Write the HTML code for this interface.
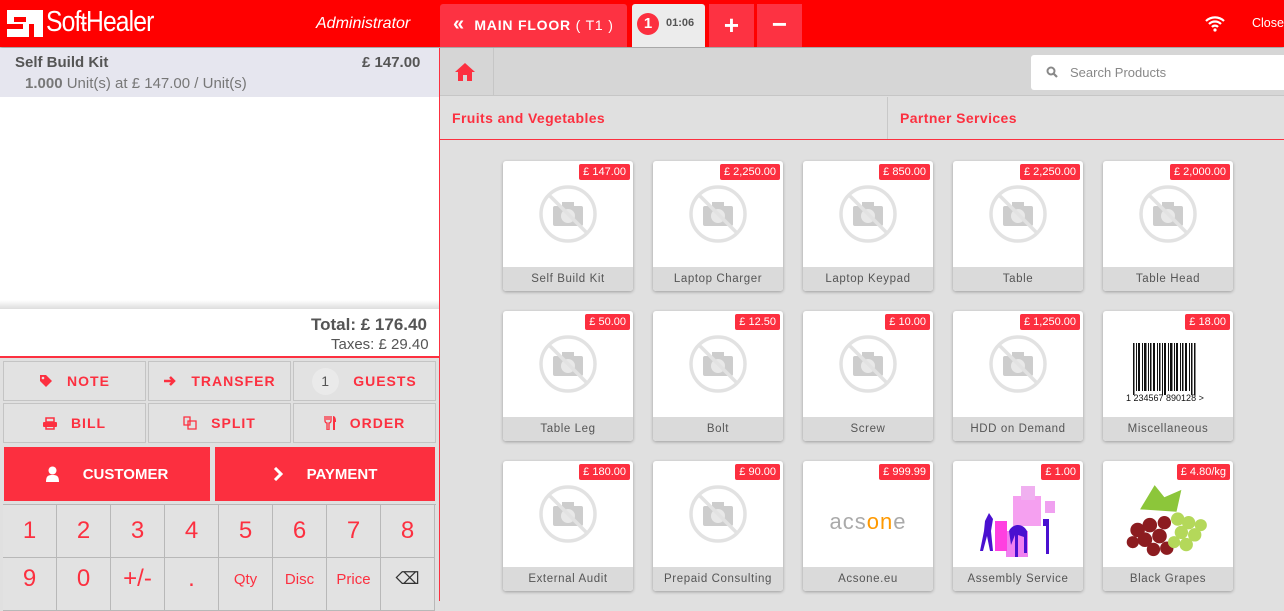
<!DOCTYPE html>
<html><head><meta charset="utf-8"><style>
*{box-sizing:border-box;margin:0;padding:0}
body{width:1284px;height:601px;overflow:hidden;font-family:"Liberation Sans",sans-serif;background:#e0e0e0;position:relative}
.a{position:absolute}
.hdr{left:0;top:0;width:1284px;height:47px;background:#ff0000;box-shadow:0 1px 3px rgba(0,0,0,.4)}
.red{color:#fc3040}
.btn{position:absolute;background:#e2e2e2;border:1px solid #c4c4c4;color:#fc3040;font-size:14px;font-weight:bold;letter-spacing:1px;display:flex;align-items:center;justify-content:center;gap:14px}
.big{position:absolute;background:#fc2f3f;color:#fff;font-size:15px;font-weight:bold;display:flex;align-items:center;justify-content:center;gap:24px}
.np{position:absolute;border-right:1px solid #b8b8b8;border-bottom:1px solid #b8b8b8;color:#fc3040;font-size:24px;display:flex;align-items:center;justify-content:center;background:#e2e2e2}
.card{position:absolute;width:130px;height:130px;background:#fff;border-radius:3px;box-shadow:0 1px 3px rgba(0,0,0,.3);overflow:hidden}
.card .nm{position:absolute;left:0;bottom:0;width:130px;height:24px;background:#dadada;color:#555;font-size:11.5px;letter-spacing:.6px;text-align:center;line-height:24px}
.card .pr{position:absolute;right:3px;top:3px;background:#fc2f3f;color:#fff;font-size:11px;padding:2px 4px;border-radius:2px}
.card .im{position:absolute;left:0;top:0;width:130px;height:106px;display:flex;align-items:center;justify-content:center}
</style></head><body>
<div class="a hdr"></div>
<div class="a" style="left:7px;top:10px;width:36px;height:27px;background:#fff"></div>
<div class="a" style="left:14px;top:17px;width:12px;height:5px;background:#ff0000"></div>
<div class="a" style="left:7px;top:24px;width:16px;height:5px;background:#ff0000"></div>
<div class="a" style="left:29px;top:24px;width:5px;height:13px;background:#ff0000"></div>
<div class="a" style="left:46px;top:6px;color:#fff;font-size:29px;letter-spacing:-1px;transform:scaleX(.85);transform-origin:left">Sof<span style="font-size:27px">ŧ</span>Healer</div>
<div class="a" style="left:316px;top:15px;color:#fff;font-size:16px;font-style:italic">Administrator</div>
<div class="a" style="left:440px;top:4px;width:187px;height:43px;background:#fd3242;border-radius:3px 3px 0 0;color:#fff;font-size:14px;font-weight:bold;letter-spacing:.8px;line-height:40px;padding-left:13px"><span style="font-size:20px">«</span>&nbsp; MAIN FLOOR <span style="font-weight:normal">( T1 )</span></div>
<div class="a" style="left:632px;top:4px;width:73px;height:43px;background:#ececec;border-radius:3px 3px 0 0"></div>
<div class="a" style="left:637px;top:13px;width:22px;height:22px;border-radius:50%;background:#fc2f3f;color:#fff;font-weight:bold;font-size:15px;text-align:center;line-height:22px">1</div>
<div class="a" style="left:666px;top:17px;font-size:11px;font-weight:bold;color:#555">01:06</div>
<div class="a" style="left:709px;top:4px;width:45px;height:43px;background:#fd3242;color:#fff;font-size:26px;font-weight:bold;text-align:center;line-height:42px">+</div>
<div class="a" style="left:757px;top:4px;width:45px;height:43px;background:#fd3242;color:#fff;font-size:26px;font-weight:bold;text-align:center;line-height:40px">−</div>
<svg class="a" style="left:1204px;top:14px" width="22" height="18" viewBox="0 0 22 18"><path d="M2 7a13 13 0 0 1 18 0M5 10a8.5 8.5 0 0 1 12 0M8 13a4 4 0 0 1 6 0" stroke="#fff" stroke-width="2.2" fill="none"/><circle cx="11" cy="16" r="1.6" fill="#fff"/></svg>
<div class="a" style="left:1252px;top:16px;color:#fff;font-size:12.5px">Close</div>

<div class="a" style="left:0;top:48px;width:439px;height:260px;background:#fff"></div>
<div class="a" style="left:0;top:48px;width:439px;height:49px;background:#e6e6ef"></div>
<div class="a" style="left:15px;top:54px;font-size:15px;font-weight:bold;color:#555">Self Build Kit</div>
<div class="a" style="left:362px;top:54px;font-size:15px;font-weight:bold;color:#555">£ 147.00</div>
<div class="a" style="left:25px;top:75px;font-size:15px;color:#777"><b style="color:#777">1.000</b> Unit(s) at £ 147.00 / Unit(s)</div>
<div class="a" style="left:0;top:300px;width:439px;height:9px;background:linear-gradient(#fff,#ddd)"></div>
<div class="a" style="left:0;top:309px;width:439px;height:49px;background:#fff;border-bottom:2px solid #fc3040"></div>
<div class="a" style="left:311px;top:315px;font-size:17px;font-weight:bold;color:#555">Total: £ 176.40</div>
<div class="a" style="left:331px;top:336px;font-size:15px;color:#555">Taxes: £ 29.40</div>
<div class="a" style="left:0;top:360px;width:439px;height:241px;background:#e0e0e0"></div>
<div class="a" style="left:439px;top:48px;width:1px;height:553px;background:#fc3040"></div>

<div class="btn" style="left:3px;top:361px;width:143px;height:40px"><svg width="14" height="14" viewBox="0 0 14 14"><path d="M1 1h6l6 6-6 6-6-6z" fill="#fc3040"/><circle cx="4" cy="4" r="1.3" fill="#e2e2e2"/></svg><span>NOTE</span></div>
<div class="btn" style="left:148px;top:361px;width:143px;height:40px"><svg width="14" height="12" viewBox="0 0 14 12"><path d="M1 6h10M7 2l4 4-4 4" stroke="#fc3040" stroke-width="2.5" fill="none"/></svg><span>TRANSFER</span></div>
<div class="btn" style="left:293px;top:361px;width:143px;height:40px"><span style="background:#eaeaea;border-radius:50%;width:27px;height:27px;display:inline-flex;align-items:center;justify-content:center;color:#555;font-weight:normal">1</span><span>GUESTS</span></div>
<div class="btn" style="left:3px;top:403px;width:143px;height:40px"><svg width="14" height="13" viewBox="0 0 14 13"><rect x="3" y="1" width="8" height="4" fill="none" stroke="#fc3040" stroke-width="1.5"/><rect x="0" y="5" width="14" height="5" rx="1" fill="#fc3040"/><rect x="3" y="9" width="8" height="3" fill="none" stroke="#fc3040" stroke-width="1.5"/></svg><span>BILL</span></div>
<div class="btn" style="left:148px;top:403px;width:143px;height:40px"><svg width="14" height="14" viewBox="0 0 14 14"><path d="M1 1h6v8H1zM5 5h8v8H5z" fill="none" stroke="#fc3040" stroke-width="1.3"/></svg><span>SPLIT</span></div>
<div class="btn" style="left:293px;top:403px;width:143px;height:40px"><svg width="12" height="14" viewBox="0 0 12 14"><path d="M1 0v5c0 1 1 2 2 2v7h2V7c1 0 2-1 2-2V0M3 0v4M5 0v4" stroke="#fc3040" stroke-width="1.3" fill="none"/><path d="M9 0c2 0 3 2 3 6h-1v8H9z" fill="#fc3040"/></svg><span>ORDER</span></div>
<div class="big" style="left:4px;top:447px;width:206px;height:54px"><svg width="13" height="16" viewBox="0 0 13 16"><circle cx="6.5" cy="4.5" r="4" fill="#fff"/><path d="M0 16c0-6 2-7 6.5-7S13 10 13 16z" fill="#fff"/></svg><span>CUSTOMER</span></div>
<div class="big" style="left:215px;top:447px;width:220px;height:54px"><svg width="10" height="14" viewBox="0 0 10 14"><path d="M2 1l6 6-6 6" stroke="#fff" stroke-width="3" fill="none"/></svg><span>PAYMENT</span></div>
<div class="a" style="left:3px;top:504px;width:433px;height:97px;border-top:1px solid #b8b8b8;border-left:1px solid #b8b8b8"></div>
<div class="np" style="left:3px;top:505px;width:54px;height:53px">1</div>
<div class="np" style="left:57px;top:505px;width:54px;height:53px">2</div>
<div class="np" style="left:111px;top:505px;width:54px;height:53px">3</div>
<div class="np" style="left:165px;top:505px;width:54px;height:53px">4</div>
<div class="np" style="left:219px;top:505px;width:54px;height:53px">5</div>
<div class="np" style="left:273px;top:505px;width:54px;height:53px">6</div>
<div class="np" style="left:327px;top:505px;width:54px;height:53px">7</div>
<div class="np" style="left:381px;top:505px;width:54px;height:53px">8</div>
<div class="np" style="left:3px;top:558px;width:54px;height:53px;padding-bottom:10px">9</div>
<div class="np" style="left:57px;top:558px;width:54px;height:53px;padding-bottom:10px">0</div>
<div class="np" style="left:111px;top:558px;width:54px;height:53px;padding-bottom:10px">+/-</div>
<div class="np" style="left:165px;top:558px;width:54px;height:53px;padding-bottom:10px">.</div>
<div class="np" style="left:219px;top:558px;width:54px;height:53px;font-size:15px;padding-bottom:10px">Qty</div>
<div class="np" style="left:273px;top:558px;width:54px;height:53px;font-size:15px;padding-bottom:10px">Disc</div>
<div class="np" style="left:327px;top:558px;width:54px;height:53px;font-size:15px;padding-bottom:10px">Price</div>
<div class="np" style="left:381px;top:558px;width:54px;height:53px;color:#333;font-size:17px;padding-bottom:10px">⌫</div>

<div class="a" style="left:440px;top:48px;width:844px;height:48px;background:#d6d6d6;border-bottom:1px solid #c6c6c6"></div>
<div class="a" style="left:493px;top:48px;width:1px;height:48px;background:#c6c6c6"></div>
<svg class="a" style="left:454px;top:62px" width="22" height="20" viewBox="0 0 22 20"><path d="M11 1L1 10h3v9h5v-6h4v6h5v-9h3z" fill="#fc3040"/></svg>
<div class="a" style="left:1031px;top:55px;width:260px;height:35px;background:#fff;border-radius:3px"></div>
<svg class="a" style="left:1046px;top:66px" width="12" height="12" viewBox="0 0 12 12"><circle cx="5" cy="5" r="3.5" stroke="#888" stroke-width="2" fill="none"/><path d="M7.5 7.5l3.5 3.5" stroke="#888" stroke-width="2.2"/></svg>
<div class="a" style="left:1070px;top:65px;font-size:13px;color:#888">Search Products</div>
<div class="a" style="left:440px;top:97px;width:844px;height:43px;background:#e0e0e0;border-bottom:1px solid #fc3040"></div>
<div class="a" style="left:887px;top:97px;width:1px;height:42px;background:#c8c8c8"></div>
<div class="a red" style="left:452px;top:110px;font-size:14px;font-weight:bold;letter-spacing:.4px">Fruits and Vegetables</div>
<div class="a red" style="left:900px;top:110px;font-size:14px;font-weight:bold;letter-spacing:.4px">Partner Services</div>

<svg width="0" height="0" style="position:absolute"><defs><symbol id="ph" viewBox="0 0 60 60"><circle cx="30" cy="30" r="27" stroke="#e2e2e2" stroke-width="3.5" fill="none"/><rect x="15" y="22" width="30" height="20" rx="2" fill="#cdcdcd"/><rect x="24" y="18" width="12" height="6" fill="#cdcdcd"/><circle cx="30" cy="32" r="7" fill="#e8e8e8"/><path d="M11 11L49 49" stroke="#e2e2e2" stroke-width="3.5"/></symbol></defs></svg>

<div class="card" style="left:503px;top:161px"><div class="im"><svg width="60" height="60"><use href="#ph"/></svg></div><div class="pr">£ 147.00</div><div class="nm">Self Build Kit</div></div>
<div class="card" style="left:653px;top:161px"><div class="im"><svg width="60" height="60"><use href="#ph"/></svg></div><div class="pr">£ 2,250.00</div><div class="nm">Laptop Charger</div></div>
<div class="card" style="left:803px;top:161px"><div class="im"><svg width="60" height="60"><use href="#ph"/></svg></div><div class="pr">£ 850.00</div><div class="nm">Laptop Keypad</div></div>
<div class="card" style="left:953px;top:161px"><div class="im"><svg width="60" height="60"><use href="#ph"/></svg></div><div class="pr">£ 2,250.00</div><div class="nm">Table</div></div>
<div class="card" style="left:1103px;top:161px"><div class="im"><svg width="60" height="60"><use href="#ph"/></svg></div><div class="pr">£ 2,000.00</div><div class="nm">Table Head</div></div>

<div class="card" style="left:503px;top:311px"><div class="im"><svg width="60" height="60"><use href="#ph"/></svg></div><div class="pr">£ 50.00</div><div class="nm">Table Leg</div></div>
<div class="card" style="left:653px;top:311px"><div class="im"><svg width="60" height="60"><use href="#ph"/></svg></div><div class="pr">£ 12.50</div><div class="nm">Bolt</div></div>
<div class="card" style="left:803px;top:311px"><div class="im"><svg width="60" height="60"><use href="#ph"/></svg></div><div class="pr">£ 10.00</div><div class="nm">Screw</div></div>
<div class="card" style="left:953px;top:311px"><div class="im"><svg width="60" height="60"><use href="#ph"/></svg></div><div class="pr">£ 1,250.00</div><div class="nm">HDD on Demand</div></div>
<div class="card" style="left:1103px;top:311px"><div class="im"><svg class="a" style="left:22px;top:30px" width="85" height="62" viewBox="0 0 85 62"><g fill="#111"><rect x="8" y="2" width="1.5" height="52"/><rect x="11" y="2" width="1" height="48"/><rect x="13" y="2" width="2" height="48"/><rect x="17" y="2" width="1" height="48"/><rect x="19" y="2" width="2.5" height="48"/><rect x="23" y="2" width="1" height="48"/><rect x="25" y="2" width="1.5" height="48"/><rect x="28" y="2" width="2" height="48"/><rect x="32" y="2" width="1" height="48"/><rect x="34" y="2" width="1.5" height="48"/><rect x="37" y="2" width="1" height="52"/><rect x="39" y="2" width="2" height="52"/><rect x="43" y="2" width="1" height="48"/><rect x="45" y="2" width="2.5" height="48"/><rect x="49" y="2" width="1" height="48"/><rect x="51" y="2" width="2" height="48"/><rect x="55" y="2" width="1" height="48"/><rect x="57" y="2" width="1.5" height="48"/><rect x="60" y="2" width="2" height="48"/><rect x="64" y="2" width="1" height="48"/><rect x="66" y="2" width="1.5" height="52"/><rect x="69" y="2" width="1.5" height="52"/></g><text x="1" y="60" font-size="9" font-family="Liberation Sans" fill="#111">1 234567 890128 &gt;</text></svg></div><div class="pr">£ 18.00</div><div class="nm">Miscellaneous</div></div>

<div class="card" style="left:503px;top:461px"><div class="im"><svg width="60" height="60"><use href="#ph"/></svg></div><div class="pr">£ 180.00</div><div class="nm">External Audit</div></div>
<div class="card" style="left:653px;top:461px"><div class="im"><svg width="60" height="60"><use href="#ph"/></svg></div><div class="pr">£ 90.00</div><div class="nm">Prepaid Consulting</div></div>
<div class="card" style="left:803px;top:461px"><div class="im" style="padding-top:16px"><span style="font-size:22px;color:#aaa;letter-spacing:1px">acs<span style="color:#f90">on</span>e</span></div><div class="pr">£ 999.99</div><div class="nm">Acsone.eu</div></div>
<div class="card" style="left:953px;top:461px"><div class="im" style="padding-top:14px"><svg width="90" height="80" viewBox="0 0 90 80"><rect x="40" y="15" width="28" height="30" fill="#f5a0f0"/><rect x="48" y="5" width="14" height="14" fill="#f0b0f0"/><rect x="33" y="50" width="22" height="26" fill="#f080f0"/><rect x="22" y="40" width="12" height="30" fill="#ff40e0"/><rect x="72" y="20" width="10" height="12" fill="#f0a0f0"/><path d="M12 40l4-8 4 6-2 12 2 20h-3l-3-15-4 15H7l4-20z" fill="#4a10d0"/><path d="M36 50c4-8 14-8 18 0v22h-3V56l-6-2v22h-3V54l-4 10z" fill="#4a10d0"/><path d="M70 38h6v35h-3V45h-3z" fill="#4a10d0"/></svg></div><div class="pr">£ 1.00</div><div class="nm">Assembly Service</div></div>
<div class="card" style="left:1103px;top:461px"><div class="im" style="padding-top:14px"><svg width="110" height="85" viewBox="0 0 90 70"><path d="M22 25l12-20 8 10 14-6-4 18z" fill="#8cc63a"/><g fill="#8c1c20"><circle cx="20" cy="42" r="6"/><circle cx="30" cy="38" r="6"/><circle cx="26" cy="50" r="6"/><circle cx="38" cy="47" r="6"/><circle cx="33" cy="58" r="5.5"/><circle cx="42" cy="36" r="5.5"/><circle cx="44" cy="57" r="5.5"/><circle cx="16" cy="52" r="5"/></g><g fill="#b4d85a"><circle cx="53" cy="33" r="5.5"/><circle cx="62" cy="36" r="5.5"/><circle cx="56" cy="44" r="5.5"/><circle cx="67" cy="46" r="5.5"/><circle cx="60" cy="54" r="5.5"/><circle cx="72" cy="38" r="5"/><circle cx="50" cy="52" r="5"/></g></svg></div><div class="pr">£ 4.80/kg</div><div class="nm">Black Grapes</div></div>
</body></html>
